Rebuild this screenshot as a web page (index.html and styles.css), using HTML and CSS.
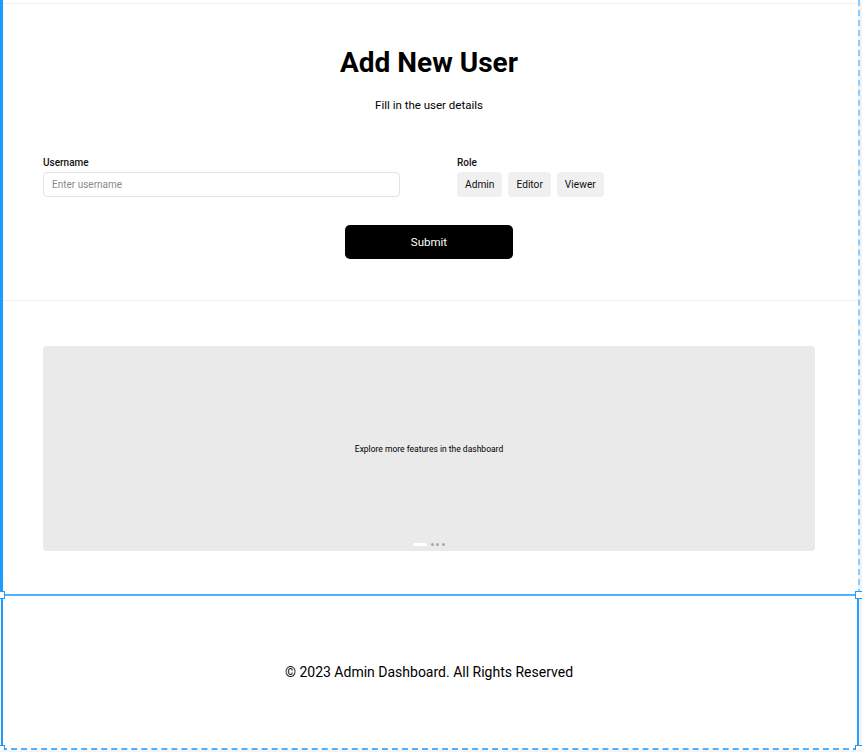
FILE: index.html
```html
<!DOCTYPE html>
<html lang="en">
<head>
<meta charset="utf-8">
<title>Add New User</title>
<link rel="stylesheet" href="styles.css">
</head>
<body>
<div class="page">
  <div class="topbar"></div>
  <section class="form-section">
    <h1 class="title">Add New User</h1>
    <p class="subtitle">Fill in the user details</p>
    <form class="form">
      <div class="fields">
        <div class="field">
          <label class="label" for="username">Username</label>
          <input id="username" class="input" type="text" placeholder="Enter username">
        </div>
        <div class="field">
          <span class="label">Role</span>
          <div class="roles">
            <button type="button" class="role">Admin</button>
            <button type="button" class="role">Editor</button>
            <button type="button" class="role">Viewer</button>
          </div>
        </div>
      </div>
      <button type="button" class="submit">Submit</button>
    </form>
  </section>
  <section class="carousel-section">
    <div class="carousel">
      <p class="carousel-text">Explore more features in the dashboard</p>
      <div class="dots">
        <span class="dot active"></span>
        <span class="dot"></span>
        <span class="dot"></span>
        <span class="dot"></span>
      </div>
    </div>
  </section>
  <footer class="footer">
    <p>© 2023 Admin Dashboard. All Rights Reserved</p>
  </footer>

  <div class="page-outline"></div>
  <div class="select-box">
    <span class="handle tl"></span>
    <span class="handle tr"></span>
    <span class="handle bl"></span>
    <span class="handle br"></span>
  </div>
</div>
</body>
</html>
```

FILE: styles.css
```css
html {
  background: #f3f3f3;
}
body {
  margin: 0;
  font-family: Roboto, "Liberation Sans", sans-serif;
  color: #000;
}
.page {
  position: relative;
  width: 858px;
  background: #fff;
}
.topbar {
  height: 3px;
  border-bottom: 1px solid #f2f2f2;
}
.form-section {
  padding: 42px 43px 41px;
  border-bottom: 1px solid #f2f2f2;
  text-align: center;
}
.title {
  margin: 0;
  font-size: 28px;
  line-height: 34px;
  font-weight: 700;
}
.subtitle {
  margin: 18px 0 0;
  font-size: 11.5px;
  line-height: 14px;
}
.form {
  margin-top: 45px;
  display: flex;
  flex-direction: column;
  align-items: center;
}
.fields {
  width: 100%;
  display: grid;
  grid-template-columns: 357px 1fr;
  column-gap: 57px;
  text-align: left;
}
.field {
  display: flex;
  flex-direction: column;
}
.label {
  font-size: 10px;
  font-weight: 500;
  line-height: 12px;
  margin-bottom: 3px;
  color: #111;
}
.input {
  box-sizing: border-box;
  height: 25px;
  border: 1px solid #e3e3e3;
  border-radius: 4px;
  padding: 0 8px;
  font-family: inherit;
  font-size: 10px;
  outline: none;
}
.input::placeholder {
  color: #8a8a8a;
}
.roles {
  display: flex;
  gap: 6px;
}
.role {
  height: 25px;
  padding: 0 8px;
  border: none;
  border-radius: 4px;
  background: #f0f0f0;
  font-family: inherit;
  font-size: 10.2px;
  color: #111;
}
.submit {
  margin-top: 28px;
  width: 168px;
  height: 34px;
  border: none;
  border-radius: 5px;
  background: #000;
  color: #fff;
  font-family: inherit;
  font-size: 11.5px;
}
.carousel-section {
  padding: 45px 43px 43px;
}
.carousel {
  position: relative;
  height: 205px;
  border-radius: 4px;
  background: #eaeaea;
  display: flex;
  align-items: center;
  justify-content: center;
}
.carousel-text {
  margin: 0;
  font-size: 8.5px;
}
.dots {
  position: absolute;
  left: 0;
  right: 0;
  bottom: 5px;
  display: flex;
  justify-content: center;
  align-items: center;
  gap: 2.5px;
}
.dot {
  width: 3px;
  height: 3px;
  border-radius: 50%;
  background: #a8a8a8;
}
.dot.active {
  width: 14px;
  border-radius: 2px;
  background: #fff;
  margin-right: 1px;
}
.footer {
  height: 156px;
  display: flex;
  align-items: center;
  justify-content: center;
}
.footer p {
  margin: 0;
  font-size: 14px;
}
.page-outline {
  position: absolute;
  left: 0;
  top: 0;
  width: 855px;
  height: 595px;
  border-left: 3px solid #1e9bff;
  border-right: 2px dashed #8cccff;
  pointer-events: none;
}
.select-box {
  position: absolute;
  left: 1px;
  top: 594px;
  width: 854px;
  height: 152px;
  border-top: 2px solid #4fb0ff;
  border-right: 2px solid #2a9fff;
  border-bottom: 2px dashed #4fb0ff;
  border-left: 2px solid #1e9bff;
  pointer-events: none;
}
.handle {
  position: absolute;
  width: 6px;
  height: 6px;
  background: #fff;
  border: 1.5px solid #1e9bff;
}
.handle.tl { left: -6px; top: -5px; }
.handle.tr { right: -6px; top: -5px; }
.handle.bl { left: -6px; bottom: -5px; }
.handle.br { right: -6px; bottom: -5px; }
```
